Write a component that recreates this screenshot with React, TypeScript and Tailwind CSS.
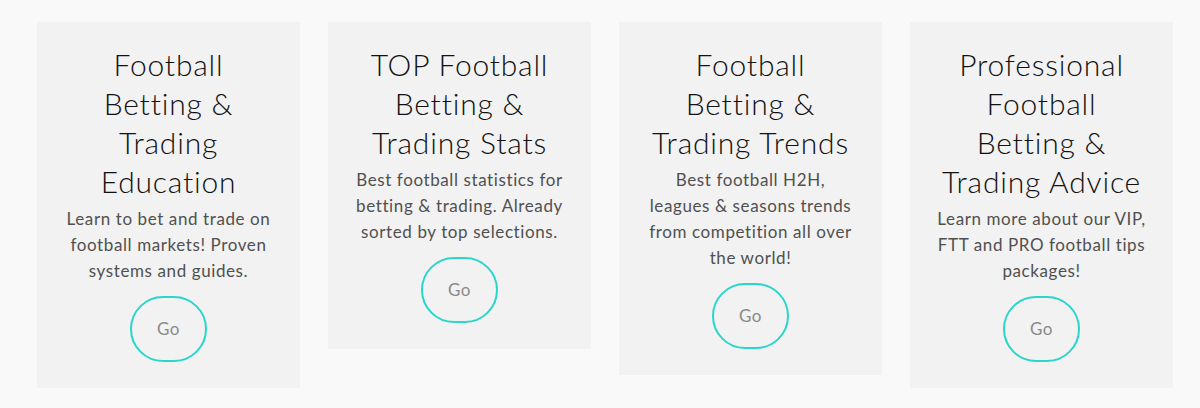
const cards = [
  {
    title: ["Football", "Betting &", "Trading", "Education"],
    text: ["Learn to bet and trade on", "football markets! Proven", "systems and guides."],
  },
  {
    title: ["TOP Football", "Betting &", "Trading Stats"],
    text: ["Best football statistics for", "betting & trading. Already", "sorted by top selections."],
  },
  {
    title: ["Football", "Betting &", "Trading Trends"],
    text: ["Best football H2H,", "leagues & seasons trends", "from competition all over", "the world!"],
  },
  {
    title: ["Professional", "Football", "Betting &", "Trading Advice"],
    text: ["Learn more about our VIP,", "FTT and PRO football tips", "packages!"],
  },
];

export default function App() {
  return (
    <div className="w-[1200px] h-[408px] bg-[#f9f9f9] flex items-start gap-[28px] pl-[37px] pt-[22px] font-['Lato',sans-serif]">
      {cards.map((c, i) => (
        <div
          key={i}
          className="w-[263px] shrink-0 bg-[#f2f2f2] px-[10px] pt-[23px] pb-[26px] flex flex-col items-center text-center"
        >
          <h2 className="text-[30px] leading-[39px] font-light tracking-[0.8px] text-[#111]">
            {c.title.map((l, j) => (
              <span key={j} className="block whitespace-nowrap">
                {l}
              </span>
            ))}
          </h2>
          <p className="mt-[5px] text-[17px] leading-[26px] tracking-[0.6px] text-[#505050]">
            {c.text.map((l, j) => (
              <span key={j} className="block whitespace-nowrap">
                {l}
              </span>
            ))}
          </p>
          <button className="mt-[12px] w-[77px] h-[66px] rounded-full border-2 border-[#2ad6cb] text-[17px] tracking-[0.5px] text-[#8a8a8a]">
            Go
          </button>
        </div>
      ))}
    </div>
  );
}
